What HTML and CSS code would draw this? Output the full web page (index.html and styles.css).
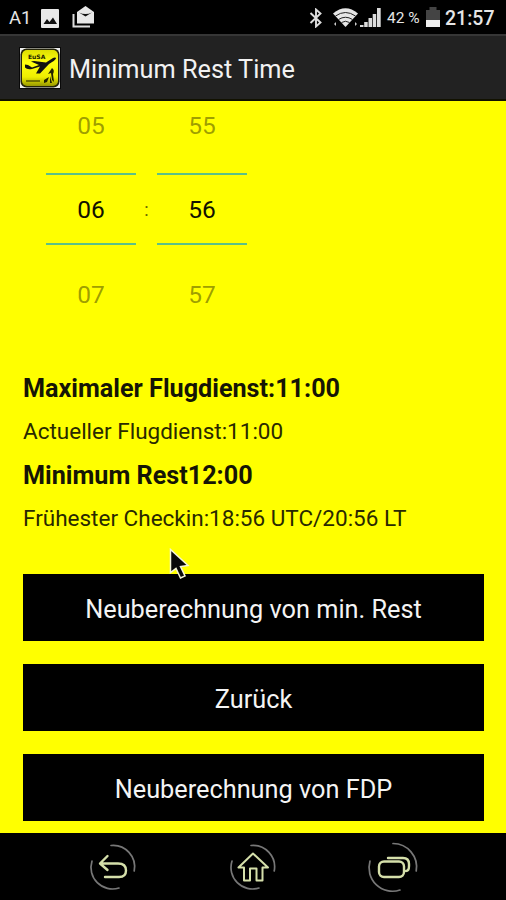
FILE: index.html
```html
<!DOCTYPE html>
<html lang="de">
<head>
<meta charset="utf-8">
<title>Minimum Rest Time</title>
<link rel="stylesheet" href="styles.css">
</head>
<body>
<div class="status">
  <span class="carrier">A1</span>
  <svg class="s-image" width="18" height="19" viewBox="0 0 18 19"><rect width="18" height="19" rx="1" fill="#e8e8e8"/><path d="M2.500 15l3.500-5 2.500 3 3.500-4.500 4 6.500z" fill="#111"/></svg>
  <svg class="s-mail" width="23" height="22" viewBox="0 0 23 22"><path d="M1.500 8v12.500H18" fill="none" stroke="#ddd" stroke-width="2"/><path d="M5 6l8.500-6L22 6v11.500H5z" fill="#e8e8e8"/><path d="M7 6.500q6.500 3 13 0l-6.500 4z" fill="#111"/></svg>
  <span class="grow"></span>
  <svg class="s-bt" width="14" height="20" viewBox="0 0 14 20"><path d="M1.500 5l10 9.500L7 18.500v-17l4.500 4L1.500 15" fill="none" stroke="#ddd" stroke-width="1.900"/></svg>
  <svg class="s-wifi" width="25" height="20" viewBox="0 0 25 20"><path d="M0 5.500Q12.500-5 25 5.500L12.500 19z" fill="#e6e6e6"/><path d="M2.500 8q10-7 20 0M5.500 11.500q7-4.500 14 0M8.500 14.500q4-2.500 8 0" fill="none" stroke="#222" stroke-width="1"/><path d="M3 14v4l-2-2zM22 14v4l2-2z" fill="#ccc"/></svg>
  <svg class="s-signal" width="21" height="20" viewBox="0 0 21 20"><path d="M0 19v-2h3.500v2zM4.200 19v-5h3.500v5zM8.500 19v-9H12v9zM12.700 19V6h3.500v13zM17 19V0h3.700v19z" fill="#dcdcdc"/></svg>
  <span class="percent">42 %</span>
  <svg class="s-batt" width="14" height="20" viewBox="0 0 14 20"><path d="M0 3h3.500V0h7v3H14v10H0z" fill="#444"/><path d="M0 13h14v7H0z" fill="#eee"/></svg>
  <span class="clock">21:57</span>
</div>
<header class="bar">
  <svg class="logo" width="42" height="42" viewBox="0 0 42 42">
    <defs><linearGradient id="g" x2="0" y2="1"><stop offset="0" stop-color="#dede00"/><stop offset=".35" stop-color="#ffff10"/><stop offset=".75" stop-color="#eeee00"/><stop offset="1" stop-color="#999900"/></linearGradient></defs>
    <rect width="42" height="42" fill="#090909"/><rect x="1" y="1" width="40" height="40" fill="#eee"/>
    <rect x="1.500" y="1.500" width="39" height="39" rx="6" fill="#25250a"/>
    <rect x="3" y="3" width="36" height="36" rx="5" fill="url(#g)"/>
    <text x="9" y="12" class="logo-text">EuSA</text>
    <path d="M6 17.500l3 .5 4 2.500 7-2.500-8-3.500 3-.5 12 1.500 7-4.500q3-1 3 .5-1 2-7 5.500l-9 9.500h-4l4-7-8 2.500q-5 1-7-1.500z" fill="#111"/>
    <path d="M7 34h14" stroke="#555500" stroke-width="1.500"/>
    <path d="M33 21q3 2 1 6l1 8-2-2-1-7-3 1zM25 33l5-3-2 5-3 1zM31 29l2 7h-2z" fill="#222200"/>
  </svg>
  <h1 class="title">Minimum Rest Time</h1>
</header>
<main class="content">
  <section class="picker">
    <div class="wheel"><span class="faded">05</span><span class="selected">06</span><span class="faded">07</span></div>
    <span class="colon">:</span>
    <div class="wheel"><span class="faded">55</span><span class="selected">56</span><span class="faded">57</span></div>
  </section>
  <section class="results">
    <p><strong>Maximaler Flugdienst:11:00</strong></p>
    <p class="detail">Actueller Flugdienst:11:00</p>
    <p><strong>Minimum Rest12:00</strong></p>
    <p class="detail">Frühester Checkin:18:56 UTC/20:56 LT</p>
  </section>
  <section class="actions">
    <button>Neuberechnung von min. Rest</button>
    <button>Zurück</button>
    <button>Neuberechnung von FDP</button>
  </section>
</main>
<nav class="nav">
  <svg width="52" height="52" viewBox="0 0 52 52"><g class="ring"><path d="M24 4.500A21.500 21.500 0 0 1 47.200 30"/><path d="M5 20A21.500 21.500 0 0 0 32 47"/></g><path class="glyph" d="M20.500 15l-7.500 7.500 7.500 6.500M14 22.500h17q8 0 8 7 0 6.500-7 6.500H18"/></svg>
  <svg width="52" height="52" viewBox="0 0 52 52"><g class="ring"><path d="M24 4.500A21.500 21.500 0 0 1 47.200 30"/><path d="M5 20A21.500 21.500 0 0 0 32 47"/></g><path class="glyph home" d="M26 12.500L11.500 26.500H17V39.500H23V27.500H29.500V39.500H35.500V26.500H41z"/></svg>
  <svg width="52" height="52" viewBox="0 0 52 52"><g class="ring"><path d="M26 2.500A23.500 23.500 0 0 1 49.200 30"/><path d="M3 20A23.500 23.500 0 0 0 33 49"/></g><rect class="glyph" x="12" y="20.500" width="25" height="15.500" rx="5"/><path class="glyph" d="M21 17h15q6 0 6 6v2q0 5-3 5"/></svg>
</nav>
<svg class="cursor" width="22" height="34" viewBox="0 0 22 34"><path d="M1.500 1.500v23l5.500-4 4.500 9.500 4.500-2-4.500-9.500 7.500-1z" fill="#080808" stroke="#f4f4d8" stroke-width="1.500"/></svg>
</body>
</html>
```

FILE: styles.css
```css
* { box-sizing: border-box; }
body {
  margin: 0;
  width: 506px;
  height: 900px;
  display: flex;
  flex-direction: column;
  position: relative;
  overflow: hidden;
  background: #000;
  font-family: Roboto, "Liberation Sans", sans-serif;
}
svg { display: block; flex: none; }
.status {
  height: 34px;
  flex: none;
  display: flex;
  align-items: center;
  padding: 2px 11px 0 9px;
  color: #e6e6e6;
  white-space: nowrap;
}
.carrier { width: 32px; font-size: 18.500px; }
.s-mail { margin-left: 13px; margin-top: -3px; }
.grow { flex: 1; }
.s-wifi { margin-left: 10px; }
.s-signal { margin-left: 2px; }
.percent { width: 35px; margin-left: 6px; font-size: 15.500px; }
.s-batt { margin-left: 4px; margin-top: -2px; }
.clock { width: 50px; margin-left: 5px; font-size: 19.500px; font-weight: 500; }
.bar {
  height: 67px;
  flex: none;
  display: flex;
  align-items: center;
  padding-left: 19px;
  border-top: 2px solid #363636;
  border-bottom: 2px solid #111100;
  background: #222;
}
.title {
  margin: 4px 0 0 8px;
  color: #f2f2f2;
  font-size: 25.300px;
  font-weight: 400;
  line-height: 40px;
  white-space: nowrap;
}
.logo-text { font: 700 6px "DejaVu Sans", sans-serif; fill: #222200; }
.content {
  height: 732px;
  flex: none;
  background: #ff0;
  padding: 0 22px 0 23px;
}
.picker {
  height: 266px;
  margin-left: 23px;
  display: flex;
}
.wheel {
  width: 90px;
  display: grid;
  grid-template-rows: 72px 72px 71px;
  align-content: start;
  text-align: center;
  font-size: 24.500px;
}
.faded { color: rgba(0, 0, 0, .4); line-height: 50px; }
.selected {
  height: 72px;
  border: solid #5cc088;
  border-width: 2px 0;
  color: #111100;
  line-height: 70px;
}
.wheel .faded:last-child { line-height: 99px; }
.colon { width: 21px; padding-top: 98px; text-align: center; font-size: 18px; color: #666600; }
.results { height: 208px; color: #151505; }
.results p { margin: 0; height: 43.500px; line-height: 43.500px; white-space: nowrap; }
.results strong { font-size: 25.200px; font-weight: 700; }
.results .detail { font-size: 22.500px; line-height: 41.500px; color: #292900; }
.actions { display: grid; gap: 23px; margin-top: -1px; }
.actions button {
  height: 67px;
  border: 0;
  border-radius: 0;
  padding: 4px 0 0;
  background: #000;
  color: #f4f4f4;
  font: 400 25.300px Roboto, "Liberation Sans", sans-serif;
}
.nav {
  height: 67px;
  flex: none;
  display: grid;
  grid-template-columns: repeat(3, 52px);
  justify-content: center;
  column-gap: 88px;
  align-items: center;
}
.ring { fill: none; stroke: #777; stroke-width: 1.700; stroke-linecap: round; }
.glyph { fill: none; stroke: #d5dfaa; stroke-width: 2.400; stroke-linecap: round; stroke-linejoin: round; }
.home { stroke-width: 2; }
.cursor { position: absolute; left: 169px; top: 548px; }
```
